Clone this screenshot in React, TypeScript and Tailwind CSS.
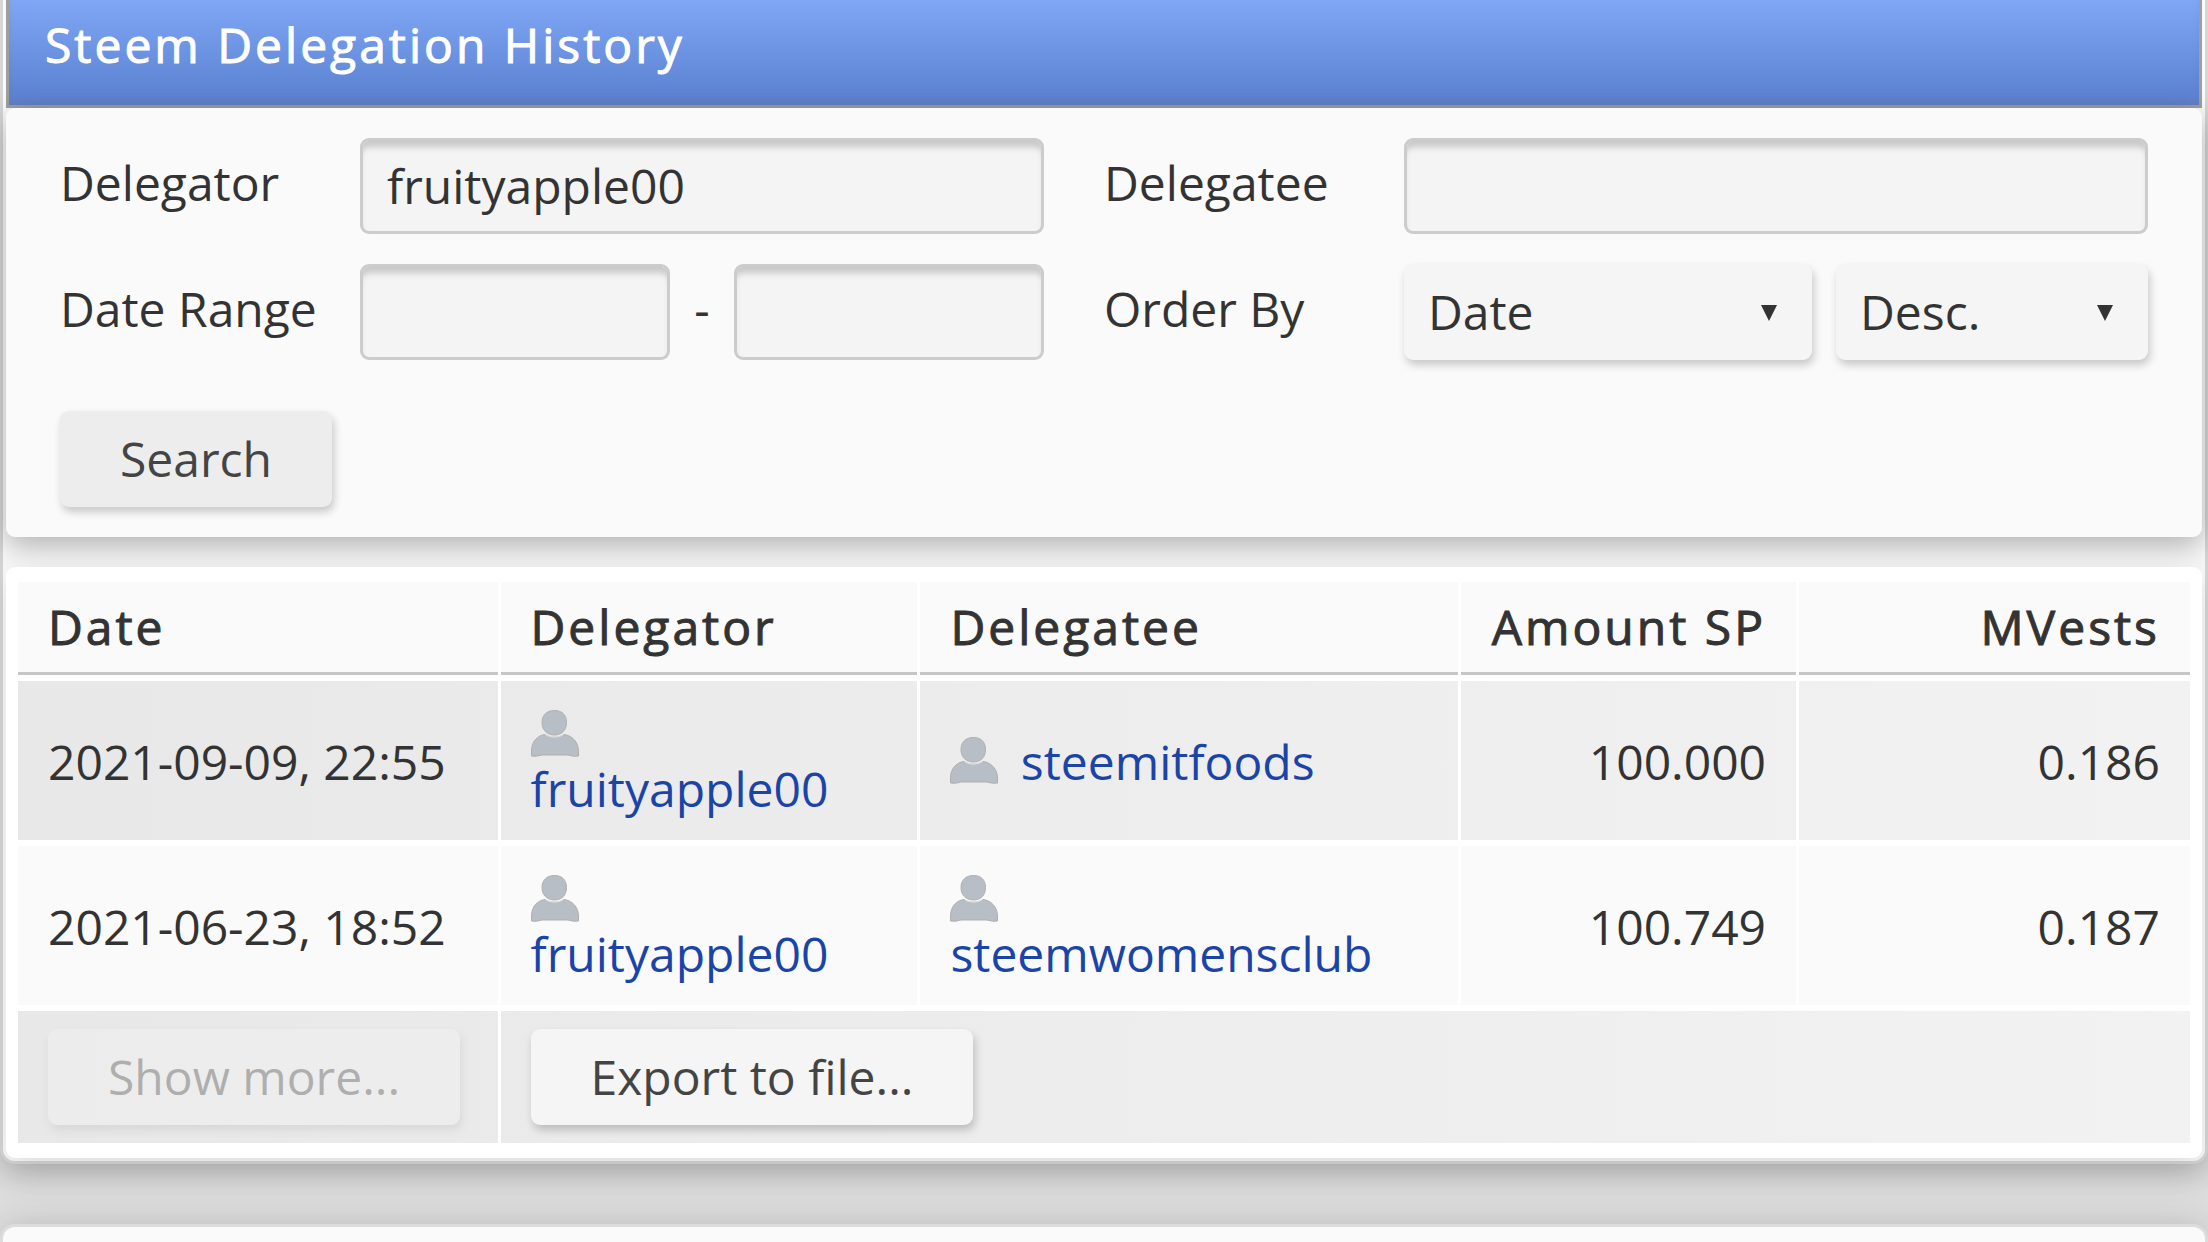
import type { ButtonHTMLAttributes, InputHTMLAttributes, SelectHTMLAttributes } from 'react';
import clsx from 'clsx';

type Delegation = {
  date: string;
  delegator: string;
  delegatee: string;
  amount: string;
  mvests: string;
};

const delegations: Delegation[] = [
  { date: '2021-09-09, 22:55', delegator: 'fruityapple00', delegatee: 'steemitfoods', amount: '100.000', mvests: '0.186' },
  { date: '2021-06-23, 18:52', delegator: 'fruityapple00', delegatee: 'steemwomensclub', amount: '100.749', mvests: '0.187' },
];

const headCell =
  'h-[93px] border-b-3 border-[#c6c6c6] bg-[#fafafa] px-[30px] font-normal tracking-[3px] whitespace-nowrap [-webkit-text-stroke:1px]';
const bodyCell = 'h-[159px] px-[30px] pt-0.5 align-middle';
const shaded = 'bg-linear-to-r from-[#e8e8e8] to-[#f2f2f2]';

function TextInput(props: InputHTMLAttributes<HTMLInputElement>) {
  return (
    <input
      type="text"
      className="h-24 w-full min-w-0 rounded-[9px] border-3 border-[#cccccc] bg-[#f4f4f4] px-6 pb-0.5 shadow-[inset_0_9px_6px_-3px_#c8c8c8]"
      {...props}
    />
  );
}

function Select({ children, ...props }: SelectHTMLAttributes<HTMLSelectElement>) {
  return (
    <div className="relative w-full">
      <select
        className="h-24 w-full appearance-none rounded-[9px] bg-[#f5f5f5] px-6 shadow-[2px_5px_9px_rgba(0,0,0,0.2)]"
        {...props}
      >
        {children}
      </select>
      <svg viewBox="0 0 16 16" className="pointer-events-none absolute top-[41px] right-[35px] size-4 fill-[#333333]" aria-hidden="true">
        <path d="M0 0H16L8 16Z" />
      </svg>
    </div>
  );
}

function Button({ className, ...props }: ButtonHTMLAttributes<HTMLButtonElement>) {
  return (
    <button
      className={clsx(
        'block h-24 rounded-[9px] px-[60px] text-[#444444] shadow-[2px_5px_9px_rgba(0,0,0,0.2)] disabled:opacity-35',
        className,
      )}
      {...props}
    />
  );
}

function UserIcon() {
  return (
    <svg viewBox="0 0 48 47" className="mr-2.5 inline-block h-[47px] w-12 align-[-4px]" aria-hidden="true">
      <g fill="#b8bec6" stroke="#afafaf" strokeWidth="1">
        <path d="M0.500 46V41C0.500 32 6 25.500 14 24.500C19 28 28 28 33 24.500C41 25.500 47.500 32 47.500 41V46Q43 47 37 45H11Q5 47 0.500 46Z" />
        <path d="M23.500 0.500C31 0.500 35.500 5 35.500 12.500C35.500 20 31 25 23.500 25C16 25 11 20 11 12.500C11 5 16 0.500 23.500 0.500Z" />
      </g>
      <path d="M14.500 24.500C19 28 28 28 32.500 24.500" fill="none" stroke="#e6e6e6" strokeWidth="1" />
    </svg>
  );
}

function UserLink({ name }: { name: string }) {
  return (
    <>
      <UserIcon />{' '}
      <a href={`#${name}`} className="text-[#1a44a8]">
        {name}
      </a>
    </>
  );
}

export default function App() {
  return (
    <div className="flex min-h-screen flex-col bg-[#dedede] font-['Open_Sans',sans-serif] text-[48px] leading-[54px] text-[#333333]">
      {/* Main panel */}
      <main className="rounded-b-[15px] border-x-3 border-b-3 border-[#d6d6d6] bg-[#fafafa] px-[3px] pb-[3px] shadow-[0_9px_36px_rgba(0,0,0,0.2)]">
        <header className="border-x-3 border-b-3 border-[#9e9e9e] bg-linear-to-b from-[#80a6f6] to-[#5f85d5] to-85% px-9 pt-2.5 pb-[26px] shadow-[inset_0_-6px_9px_-4px_rgba(110,110,150,0.4)]">
          <h1 className="leading-[69px] tracking-[3px] text-white [-webkit-text-stroke:1px]">Steem Delegation History</h1>
        </header>

        {/* Search form */}
        <form
          className="rounded-[9px] bg-[#fafafa] px-[54px] py-[30px] shadow-[0_9px_30px_rgba(0,0,0,0.3)]"
          onSubmit={(e) => e.preventDefault()}
        >
          <div className="grid grid-cols-[300px_684fr_60px_300px_744fr] items-center gap-y-[30px]">
            <label htmlFor="delegator" className="pb-1.5">Delegator</label>
            <TextInput id="delegator" defaultValue="fruityapple00" />
            <label htmlFor="delegatee" className="col-start-4 pb-1.5">Delegatee</label>
            <TextInput id="delegatee" />

            <label htmlFor="date-from" className="pb-1.5">Date Range</label>
            <div className="flex items-center">
              <TextInput id="date-from" />
              <span className="w-16 shrink-0 pb-1.5 text-center">-</span>
              <TextInput aria-label="Date to" />
            </div>
            <label htmlFor="order-by" className="col-start-4 pb-1.5">Order By</label>
            <div className="grid grid-cols-[408fr_312fr] gap-6">
              <Select id="order-by">
                <option>Date</option>
                <option>Amount</option>
              </Select>
              <Select aria-label="Order direction">
                <option>Desc.</option>
                <option>Asc.</option>
              </Select>
            </div>
          </div>
          <Button type="submit" className="mt-[51px] bg-[#ededed]">Search</Button>
        </form>

        {/* Results */}
        <section className="mt-[30px] rounded-[9px] bg-white px-[9px] py-[9px] shadow-[0_9px_30px_rgba(0,0,0,0.12)]">
          <table className="w-full table-fixed border-separate border-spacing-x-[3px] border-spacing-y-1.5">
            <colgroup>
              <col className="w-[22.2%]" />
              <col className="w-[19.3%]" />
              <col className="w-[24.9%]" />
              <col className="w-[15.5%]" />
              <col />
            </colgroup>
            <thead>
              <tr>
                <th className={clsx(headCell, 'text-left')}>Date</th>
                <th className={clsx(headCell, 'text-left')}>Delegator</th>
                <th className={clsx(headCell, 'text-left')}>Delegatee</th>
                <th className={clsx(headCell, 'text-right')}>Amount SP</th>
                <th className={clsx(headCell, 'text-right')}>MVests</th>
              </tr>
            </thead>
            <tbody>
              {delegations.map((row, i) => (
                <tr key={row.date} className={i % 2 === 0 ? shaded : 'bg-[#fafafa]'}>
                  <td className={bodyCell}>{row.date}</td>
                  <td className={bodyCell}><UserLink name={row.delegator} /></td>
                  <td className={bodyCell}><UserLink name={row.delegatee} /></td>
                  <td className={clsx(bodyCell, 'text-right')}>{row.amount}</td>
                  <td className={clsx(bodyCell, 'text-right')}>{row.mvests}</td>
                </tr>
              ))}
            </tbody>
            <tfoot>
              <tr className={shaded}>
                <td className="px-[30px] py-[18px]">
                  <Button type="button" className="bg-[#f5f5f5]" disabled>Show more...</Button>
                </td>
                <td colSpan={4} className="px-[30px] py-[18px]">
                  <Button type="button" className="bg-[#f5f5f5]">Export to file...</Button>
                </td>
              </tr>
            </tfoot>
          </table>
        </section>
      </main>

      {/* Top edge of the next panel */}
      <section className="mt-[60px] flex-1 rounded-t-[15px] border-x-3 border-t-3 border-[#dcdcdc] bg-[#fafafa] shadow-[0_6px_36px_rgba(0,0,0,0.28)]" />
    </div>
  );
}
